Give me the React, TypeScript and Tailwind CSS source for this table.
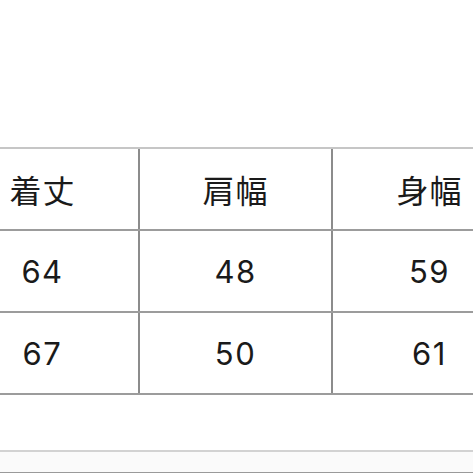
const HEAD = ["着丈", "肩幅", "身幅"];
const ROWS = [
  ["64", "48", "59"],
  ["67", "50", "61"],
];

function Row({ cells, head }: { cells: string[]; head?: boolean }) {
  return (
    <div className="flex h-[82px] border-b-2 border-[#9c9c9c]">
      {cells.map((c, i) => (
        <div
          key={i}
          className={
            "w-[193px] shrink-0 flex items-center justify-center text-[#1a1a1a] leading-none " +
            (head ? "text-[32px] tracking-[1px] " : "text-[31px] tracking-[1.5px] font-[Inter,sans-serif] ") +
            (i < cells.length - 1 ? "border-r-2 border-[#8c8c8c]" : "")
          }
        >
          {c}
        </div>
      ))}
    </div>
  );
}

export default function App() {
  return (
    <div
      className="w-[473px] h-[473px] overflow-hidden bg-white"
      style={{ fontFamily: '"Noto Sans CJK JP", "Noto Sans", sans-serif' }}
    >
      <div className="h-[147px]" />
      <div className="-ml-[53px] w-[600px] border-t-2 border-[#c6c6c6]">
        <Row cells={HEAD} head />
        {ROWS.map((r, i) => (
          <Row key={i} cells={r} />
        ))}
      </div>
      <div className="h-[55px]" />
      <div className="h-[2px] bg-[#d2d2d2]" />
      <div className="h-[20px] bg-[#fafafa]" />
      <div className="h-[2px] bg-[#9a9a9a]" />
    </div>
  );
}
